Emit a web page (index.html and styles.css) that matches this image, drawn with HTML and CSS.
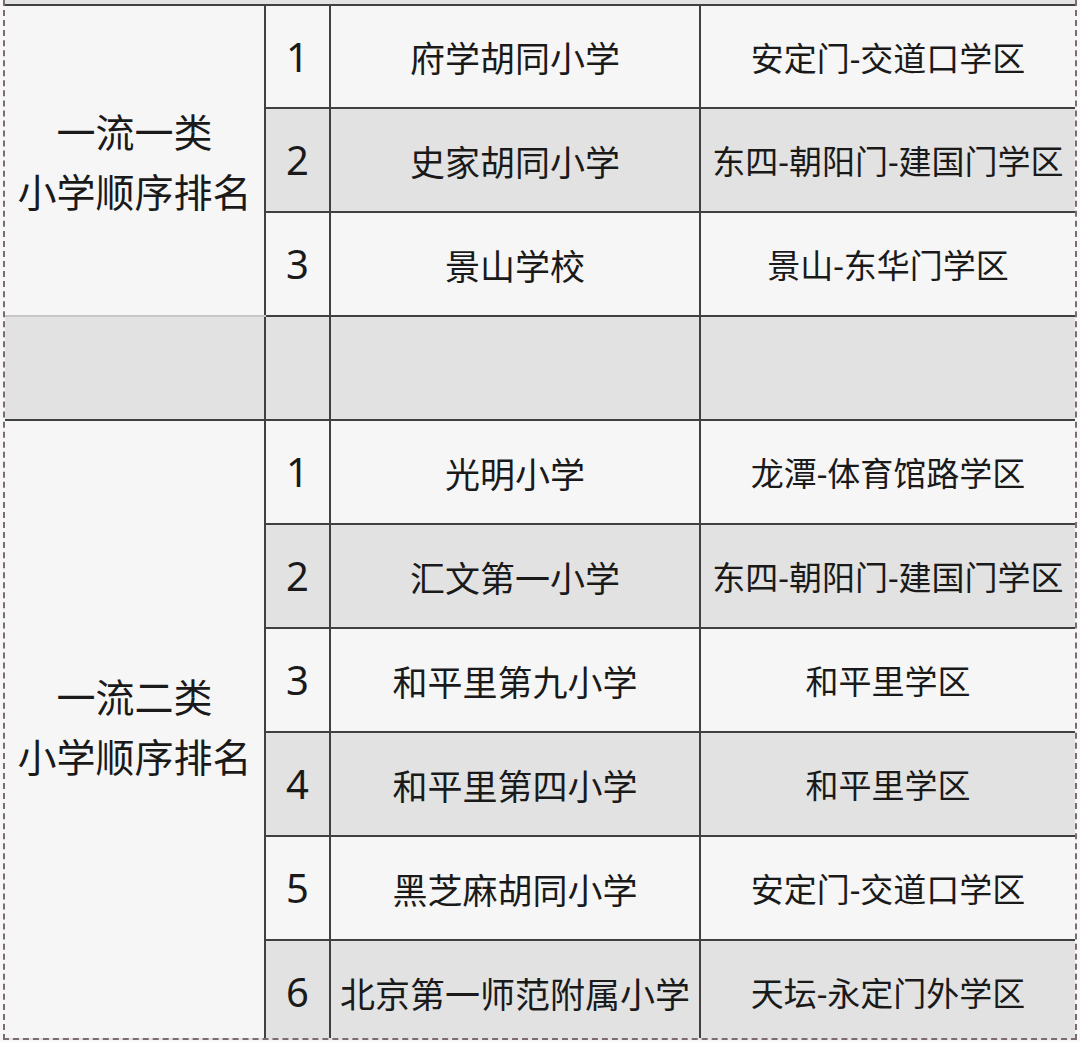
FILE: index.html
```html
<!DOCTYPE html>
<html lang="zh-CN">
<head>
<meta charset="utf-8">
<title>小学顺序排名</title>
<link rel="stylesheet" href="styles.css">
</head>
<body>
<div class="frame">
  <table class="rank">
    <colgroup>
      <col class="c-group">
      <col class="c-num">
      <col class="c-school">
      <col class="c-area">
    </colgroup>
    <tbody>
      <tr class="light">
        <td class="group" rowspan="3">一流一类<br>小学顺序排名</td>
        <td class="num">1</td>
        <td class="school">府学胡同小学</td>
        <td class="area">安定门-交道口学区</td>
      </tr>
      <tr class="dark">
        <td class="num">2</td>
        <td class="school">史家胡同小学</td>
        <td class="area">东四-朝阳门-建国门学区</td>
      </tr>
      <tr class="light">
        <td class="num">3</td>
        <td class="school">景山学校</td>
        <td class="area">景山-东华门学区</td>
      </tr>
      <tr class="dark spacer">
        <td class="group-gap"></td>
        <td class="num"></td>
        <td class="school"></td>
        <td class="area"></td>
      </tr>
      <tr class="light">
        <td class="group group-b" rowspan="6">一流二类<br>小学顺序排名</td>
        <td class="num">1</td>
        <td class="school">光明小学</td>
        <td class="area">龙潭-体育馆路学区</td>
      </tr>
      <tr class="dark">
        <td class="num">2</td>
        <td class="school">汇文第一小学</td>
        <td class="area">东四-朝阳门-建国门学区</td>
      </tr>
      <tr class="light">
        <td class="num">3</td>
        <td class="school">和平里第九小学</td>
        <td class="area">和平里学区</td>
      </tr>
      <tr class="dark">
        <td class="num">4</td>
        <td class="school">和平里第四小学</td>
        <td class="area">和平里学区</td>
      </tr>
      <tr class="light">
        <td class="num">5</td>
        <td class="school">黑芝麻胡同小学</td>
        <td class="area">安定门-交道口学区</td>
      </tr>
      <tr class="dark">
        <td class="num">6</td>
        <td class="school">北京第一师范附属小学</td>
        <td class="area">天坛-永定门外学区</td>
      </tr>
    </tbody>
  </table>
</div>
</body>
</html>
```

FILE: styles.css
```css
html, body {
  margin: 0;
  padding: 0;
  background: #f7f7f7;
}

body {
  font-family: "Noto Sans", "Noto Sans CJK SC", sans-serif;
  color: #1a1a1a;
}

.frame {
  margin-left: 3px;
  width: 1070px;
  height: 1034px;
  overflow: hidden;
  border-left: 2px dashed #7d6b72;
  border-right: 2px dashed #7d6b72;
  border-bottom: 2px dashed #7d6b72;
  background: linear-gradient(#e3e3e3 0, #e3e3e3 4px, #f6f6f6 4px);
  padding-top: 4px;
  box-sizing: content-box;
}

.rank {
  width: 1070px;
  table-layout: fixed;
  border-collapse: collapse;
}

.c-group { width: 260px; }
.c-num { width: 65px; }
.c-school { width: 370px; }
.c-area { width: 375px; }

.rank td {
  height: 102px;
  padding: 0;
  text-align: center;
  vertical-align: middle;
  border: 2px solid #404040;
  white-space: nowrap;
  overflow: hidden;
}

.rank tr:first-child td {
  height: 101px;
}

.rank td:first-child {
  border-left: none;
}

.rank td:last-child {
  border-right: none;
}

.rank tr.light td {
  background: #f6f6f6;
}

.rank tr.dark td {
  background: #e2e2e2;
}

.rank tr td.group {
  background: #f6f6f6;
  font-size: 39px;
  line-height: 60px;
  padding-top: 2px;
  border-bottom-color: #c6c6c6;
}

.rank tr td.group-b {
  padding-top: 0;
  padding-bottom: 10px;
  border-top-color: #404040;
}

.rank tr td.group-gap {
  background: #e2e2e2;
  border-top-color: #c6c6c6;
}

.num {
  font-size: 40px;
  line-height: 1;
}

.school {
  font-size: 35px;
}

.area {
  font-size: 33px;
}
```
